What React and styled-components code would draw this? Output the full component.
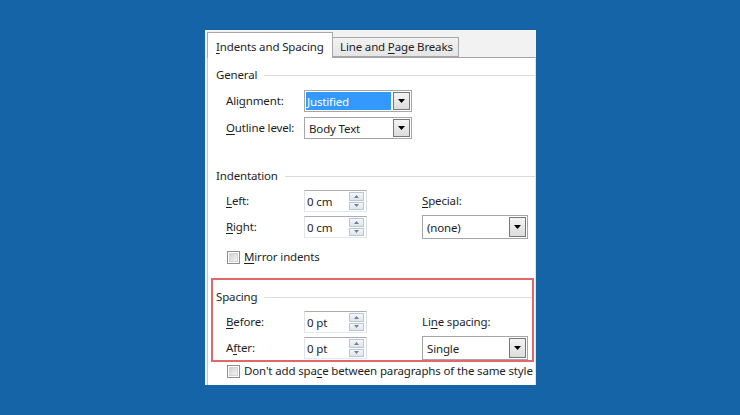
import React from 'react';
import styled, { createGlobalStyle } from 'styled-components';

const Global = createGlobalStyle`
  html, body { margin: 0; padding: 0; }
  body { background: #1664a8; font-family: "Noto Sans", "Open Sans", sans-serif; }
`;

const Page = styled.div`
  width: 740px;
  height: 415px;
  box-sizing: border-box;
  padding: 30px 0 0 205px;
  background: #1664a8;
  overflow: hidden;
`;

const Dialog = styled.div`
  width: 331px;
  height: 355px;
  box-sizing: border-box;
  padding: 2px 0 0 2px;
  background: #f2f2f2;
  display: flex;
  flex-direction: column;
  font-size: 11.5px;
  letter-spacing: -0.15px;
  color: #1e1e1e;
`;

const TabStrip = styled.div`
  display: flex;
  align-items: flex-end;
  height: 26px;
  position: relative;
  z-index: 1;
`;

const Tab = styled.div`
  box-sizing: border-box;
  width: 126px;
  display: flex;
  align-items: ${p => (p.$active ? 'flex-start' : 'center')};
  white-space: nowrap;
  height: ${p => (p.$active ? 26 : 20)}px;
  margin-bottom: ${p => (p.$active ? 0 : 1)}px;
  padding: ${p => (p.$active ? '6px 0 0 8px' : '0 0 0 7px')};
  background: ${p => (p.$active ? '#ffffff' : 'linear-gradient(#f2f2f2, #e5e5e5)')};
  border: 1px solid #a8a8a8;
  border-bottom: ${p => (p.$active ? 'none' : '1px solid #a8a8a8')};
  border-left: ${p => (p.$active ? '1px solid #a8a8a8' : 'none')};
  line-height: 16px;
`;

const TabPage = styled.div`
  flex: 1;
  margin-top: -1px;
  background: #ffffff;
  border-top: 1px solid #a3a3a3;
  border-left: 1px solid #c8c8c8;
  border-right: 1px solid #e2e2e2;
  padding-left: 8px;
  display: flex;
  flex-direction: column;
`;

const GroupHeader = styled.div`
  display: flex;
  align-items: center;
  gap: 7px;
  height: 16px;
  line-height: 16px;
  margin-top: ${p => p.$mt}px;
  white-space: nowrap;
  &::after {
    content: '';
    flex: 1;
    height: 1px;
    background: #dcdcdc;
  }
`;

const Row = styled.div`
  display: grid;
  grid-template-columns: 78px 63px 55px 106px;
  align-items: center;
  height: ${p => p.$h}px;
  margin-top: ${p => p.$mt}px;
  padding-left: 10px;
  white-space: nowrap;
`;

const Label = styled.span`
  line-height: 16px;
`;

const U = styled.span`
  text-decoration: underline;
  text-underline-offset: 2px;
`;

const SelectBox = styled.div`
  box-sizing: border-box;
  width: ${p => p.$w}px;
  height: ${p => p.$h}px;
  grid-column: ${p => p.$span || 'auto'};
  border: 1px solid #a6a6a6;
  padding: 1px;
  display: flex;
  background: #fff;
`;

const SelectValue = styled.div`
  flex: 1;
  display: flex;
  align-items: center;
  padding-left: ${p => (p.$selected ? 1 : 3)}px;
  margin-right: 2px;
  background: ${p => (p.$selected ? '#3399ff' : 'transparent')};
  color: ${p => (p.$selected ? '#ffffff' : 'inherit')};
`;

const DropButton = styled.div`
  box-sizing: border-box;
  width: 17px;
  border: 1px solid #787878;
  background: linear-gradient(#f4f4f4, #dcdcdc);
  display: flex;
  align-items: center;
  justify-content: center;
`;

const SpinBox = styled.div`
  box-sizing: border-box;
  width: 63px;
  height: 22px;
  border: 1px solid #abadb3;
  border-color: #abadb3 #dbdfe6 #e3e9ef #e2e3ea;
  display: flex;
  align-items: center;
  padding: 1px 2px 1px 2px;
  background: #fff;
`;

const SpinText = styled.span`
  flex: 1;
`;

const SpinButtons = styled.div`
  width: 15px;
  height: 18px;
  display: flex;
  flex-direction: column;
  gap: 1px;
`;

const SpinButton = styled.div`
  flex: 1;
  box-sizing: border-box;
  border: 1px solid #bcc6d3;
  background: linear-gradient(#f4f7fa, #dfe5ed);
  display: flex;
  align-items: center;
  justify-content: center;
`;

const CheckRow = styled.div`
  display: flex;
  align-items: center;
  gap: 4px;
  height: ${p => p.$h}px;
  margin-top: ${p => p.$mt}px;
  padding-left: 11px;
  white-space: nowrap;
`;

const CheckBox = styled.div`
  flex-shrink: 0;
  box-sizing: border-box;
  width: 13px;
  height: 13px;
  border: 1px solid #8e8f8f;
  padding: 1px;
  background: #fff;
  &::after {
    content: '';
    display: block;
    width: 100%;
    height: 100%;
    box-sizing: border-box;
    border: 1px solid #d4d4d4;
    background: linear-gradient(135deg, #d2d2d2, #f4f4f4);
  }
`;

const Highlight = styled.div`
  margin: ${p => p.$mt}px 1px 0 -5px;
  border: 2px solid #e06868;
  padding: 9px 0 0 3px;
  display: flex;
  flex-direction: column;
`;

const Tri = ({ up, color = '#000' }) => (
  <svg width="7" height="4" viewBox="0 0 7 4">
    <path d={up ? 'M0 4h7L3.5 0z' : 'M0 0h7L3.5 4z'} fill={color} />
  </svg>
);

const SmallTri = ({ up }) => (
  <svg width="5" height="3" viewBox="0 0 5 3">
    <path d={up ? 'M0 3h5L2.5 0z' : 'M0 0h5L2.5 3z'} fill="#6f8198" />
  </svg>
);

const Select = ({ w, h, span, value, selected }) => (
  <SelectBox $w={w} $h={h} $span={span}>
    <SelectValue $selected={selected}><span>{value}</span></SelectValue>
    <DropButton>
      <Tri />
    </DropButton>
  </SelectBox>
);

const Spin = ({ value }) => (
  <SpinBox>
    <SpinText>{value}</SpinText>
    <SpinButtons>
      <SpinButton><SmallTri up /></SpinButton>
      <SpinButton><SmallTri /></SpinButton>
    </SpinButtons>
  </SpinBox>
);

export default function App() {
  return (
    <Page>
      <Global />
      <Dialog>
        <TabStrip>
          <Tab $active><span><U>I</U>ndents and Spacing</span></Tab>
          <Tab><span>Line and <U>P</U>age Breaks</span></Tab>
        </TabStrip>
        <TabPage>
          <GroupHeader $mt={9}><span>General</span></GroupHeader>
          <Row $h={22} $mt={7}>
            <Label>Ali<U>g</U>nment:</Label>
            <Select w={108} h={22} span="2 / span 3" value="Justified" selected />
          </Row>
          <Row $h={22} $mt={5}>
            <Label><U>O</U>utline level:</Label>
            <Select w={108} h={22} span="2 / span 3" value="Body Text" />
          </Row>

          <GroupHeader $mt={29}><span>Indentation</span></GroupHeader>
          <Row $h={22} $mt={6}>
            <Label><U>L</U>eft:</Label>
            <Spin value="0 cm" />
            <span />
            <Label><U>S</U>pecial:</Label>
          </Row>
          <Row $h={24} $mt={3}>
            <Label><U>R</U>ight:</Label>
            <Spin value="0 cm" />
            <span />
            <Select w={106} h={24} value="(none)" />
          </Row>
          <CheckRow $h={16} $mt={10}>
            <CheckBox />
            <Label><U>M</U>irror indents</Label>
          </CheckRow>

          <Highlight $mt={13}>
            <GroupHeader $mt={0}><span>Spacing</span></GroupHeader>
            <Row $h={22} $mt={6}>
              <Label><U>B</U>efore:</Label>
              <Spin value="0 pt" />
              <span />
              <Label>Li<U>n</U>e spacing:</Label>
            </Row>
            <Row $h={24} $mt={3}>
              <Label>A<U>f</U>ter:</Label>
              <Spin value="0 pt" />
              <span />
              <Select w={106} h={24} value="Single" />
            </Row>
          </Highlight>
          <CheckRow $h={14} $mt={2}>
            <CheckBox />
            <Label>Don't add spa<U>c</U>e between paragraphs of the same style</Label>
          </CheckRow>
        </TabPage>
      </Dialog>
    </Page>
  );
}
